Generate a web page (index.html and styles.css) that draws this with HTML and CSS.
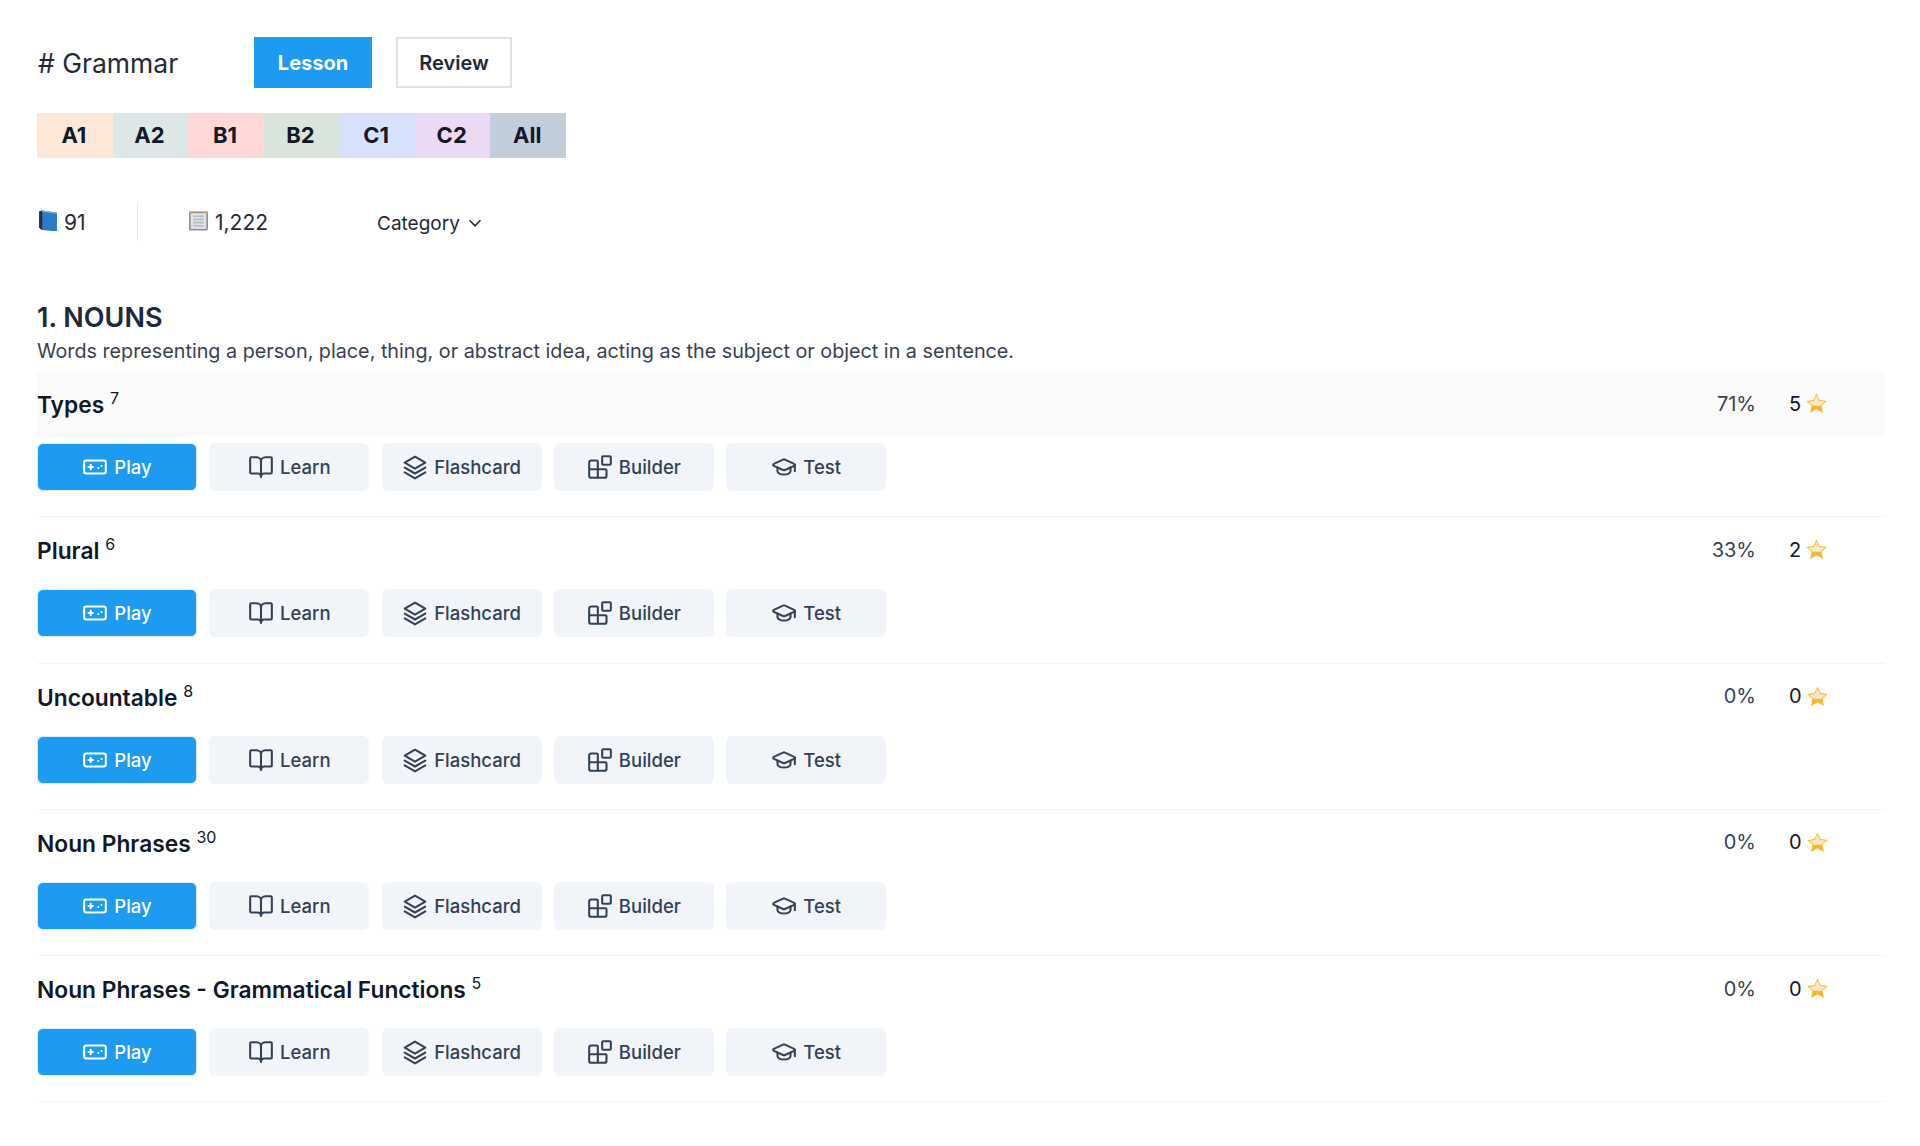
FILE: index.html
```html
<!DOCTYPE html>
<html lang="en">
<head>
    <meta charset="UTF-8">
    <title>Grammar</title>
    <link rel="stylesheet" href="styles.css">
</head>
<body>
    <svg class="sprites" width="0" height="0">
        <symbol id="i-play" viewBox="0 0 24 24"><path d="M6 12h4M8 10v4M15 13h.01M18 11h.01"/><rect x="2" y="6" width="20" height="12" rx="2"/></symbol>
        <symbol id="i-learn" viewBox="0 0 24 24"><path d="M12 7v14"/><path d="M3 18a1 1 0 0 1-1-1V4a1 1 0 0 1 1-1h5a4 4 0 0 1 4 4 4 4 0 0 1 4-4h5a1 1 0 0 1 1 1v13a1 1 0 0 1-1 1h-6a3 3 0 0 0-3 3 3 3 0 0 0-3-3z"/></symbol>
        <symbol id="i-flash" viewBox="0 0 24 24"><path d="M12 2.500 21.500 8 12 13.500 2.500 8z"/><path d="M2.500 12.500 12 18l9.500-5.500"/><path d="M2.500 17 12 22.500l9.500-5.500"/></symbol>
        <symbol id="i-build" viewBox="0 0 24 24"><rect x="14" y="2" width="8" height="8" rx="1"/><path d="M10 22V7a1 1 0 0 0-1-1H4a2 2 0 0 0-2 2v12a2 2 0 0 0 2 2h12a2 2 0 0 0 2-2v-5a1 1 0 0 0-1-1H2"/></symbol>
        <symbol id="i-test" viewBox="0 0 24 24"><path d="M21.420 10.922a1 1 0 0 0-.019-1.838L12.830 5.180a2 2 0 0 0-1.660 0L2.600 9.080a1 1 0 0 0 0 1.832l8.570 3.908a2 2 0 0 0 1.660 0z"/><path d="M22 10v6"/><path d="M6 12.500V16a6 3 0 0 0 12 0v-3.500"/></symbol>
        <symbol id="i-star" viewBox="0 0 24 24"><path class="star-fill" d="M12 1.500l3.200 6.900 7.500.9-5.500 5.100 1.500 7.400L12 18.100l-6.700 3.700 1.500-7.400L1.300 9.300l7.500-.9z"/><path class="star-top" d="M12 3.500l2.700 5.800 6 .8-4.600 4.200-8.200 0L3.300 10.100l6-.8z"/></symbol>
    </svg>

    <div class="page-head">
        <h1 class="page-title"># Grammar</h1>
        <a class="tab tab-active">Lesson</a>
        <a class="tab">Review</a>
    </div>

    <div class="levels">
        <span class="level a1">A1</span>
        <span class="level a2">A2</span>
        <span class="level b1">B1</span>
        <span class="level b2">B2</span>
        <span class="level c1">C1</span>
        <span class="level c2">C2</span>
        <span class="level all">All</span>
    </div>

    <div class="stats">
        <div class="stat stat-first">
            <svg class="emoji" viewBox="0 0 20 20"><path d="M2 1.500 5 .5l14 2v18L5 19l-3-2z" fill="#2a7cc7"/><path d="M2 1.500 5 .5v18.600L2 17z" fill="#25313f"/><path d="M5 .5l14 2v1L5 2z" fill="#6fa9de"/></svg>
            <span>91</span>
        </div>
        <div class="stat stat-second">
            <svg class="emoji" viewBox="0 0 20 20"><rect x="1" y="1.500" width="18" height="18" rx="1.500" fill="#8b8f94"/><rect x="2.500" y="3" width="15" height="15" fill="#dfe2e6"/><path d="M5 6h10M5 9h10M5 12h10M5 15h10" stroke="#b4b9bf" stroke-width="1.500"/><path d="M1 1.500h4v1.500H1zM15 1.500h4v1.500h-4z" fill="#d9a34d"/></svg>
            <span>1,222</span>
        </div>
        <div class="category">
            <span>Category</span>
            <svg class="chevron" viewBox="0 0 24 24"><path d="m6 9 6 6 6-6"/></svg>
        </div>
    </div>

    <h2 class="section-title">1. NOUNS</h2>
    <p class="section-desc">Words representing a person, place, thing, or abstract idea, acting as the subject or object in a sentence.</p>

    <div class="topic">
        <div class="topic-head topic-hover">
            <h3 class="topic-name">Types <sup>7</sup></h3>
            <span class="percent">71%</span>
            <span class="stars">5 <svg class="star"><use href="#i-star"/></svg></span>
        </div>
        <div class="actions">
            <a class="action action-play"><svg><use href="#i-play"/></svg>Play</a>
            <a class="action"><svg><use href="#i-learn"/></svg>Learn</a>
            <a class="action"><svg><use href="#i-flash"/></svg>Flashcard</a>
            <a class="action"><svg><use href="#i-build"/></svg>Builder</a>
            <a class="action"><svg><use href="#i-test"/></svg>Test</a>
        </div>
    </div>

    <div class="topic">
        <div class="topic-head">
            <h3 class="topic-name">Plural <sup>6</sup></h3>
            <span class="percent">33%</span>
            <span class="stars">2 <svg class="star"><use href="#i-star"/></svg></span>
        </div>
        <div class="actions">
            <a class="action action-play"><svg><use href="#i-play"/></svg>Play</a>
            <a class="action"><svg><use href="#i-learn"/></svg>Learn</a>
            <a class="action"><svg><use href="#i-flash"/></svg>Flashcard</a>
            <a class="action"><svg><use href="#i-build"/></svg>Builder</a>
            <a class="action"><svg><use href="#i-test"/></svg>Test</a>
        </div>
    </div>

    <div class="topic">
        <div class="topic-head">
            <h3 class="topic-name">Uncountable <sup>8</sup></h3>
            <span class="percent">0%</span>
            <span class="stars">0 <svg class="star"><use href="#i-star"/></svg></span>
        </div>
        <div class="actions">
            <a class="action action-play"><svg><use href="#i-play"/></svg>Play</a>
            <a class="action"><svg><use href="#i-learn"/></svg>Learn</a>
            <a class="action"><svg><use href="#i-flash"/></svg>Flashcard</a>
            <a class="action"><svg><use href="#i-build"/></svg>Builder</a>
            <a class="action"><svg><use href="#i-test"/></svg>Test</a>
        </div>
    </div>

    <div class="topic">
        <div class="topic-head">
            <h3 class="topic-name">Noun Phrases <sup>30</sup></h3>
            <span class="percent">0%</span>
            <span class="stars">0 <svg class="star"><use href="#i-star"/></svg></span>
        </div>
        <div class="actions">
            <a class="action action-play"><svg><use href="#i-play"/></svg>Play</a>
            <a class="action"><svg><use href="#i-learn"/></svg>Learn</a>
            <a class="action"><svg><use href="#i-flash"/></svg>Flashcard</a>
            <a class="action"><svg><use href="#i-build"/></svg>Builder</a>
            <a class="action"><svg><use href="#i-test"/></svg>Test</a>
        </div>
    </div>

    <div class="topic">
        <div class="topic-head">
            <h3 class="topic-name">Noun Phrases - Grammatical Functions <sup>5</sup></h3>
            <span class="percent">0%</span>
            <span class="stars">0 <svg class="star"><use href="#i-star"/></svg></span>
        </div>
        <div class="actions">
            <a class="action action-play"><svg><use href="#i-play"/></svg>Play</a>
            <a class="action"><svg><use href="#i-learn"/></svg>Learn</a>
            <a class="action"><svg><use href="#i-flash"/></svg>Flashcard</a>
            <a class="action"><svg><use href="#i-build"/></svg>Builder</a>
            <a class="action"><svg><use href="#i-test"/></svg>Test</a>
        </div>
    </div>
</body>
</html>
```

FILE: styles.css
```css
body {
    font-family: 'Inter', 'Liberation Sans', sans-serif;
    margin: 0;
    padding: 37px 35px 0 37px;
    background: white;
    color: #111827;
}
.sprites {
    position: absolute;
}
.page-head {
    display: flex;
    align-items: center;
    height: 51px;
}
.page-title {
    width: 217px;
    margin: 0;
    padding-left: 1px;
    box-sizing: border-box;
    font-size: 26.5px;
    font-weight: 400;
    color: #1f2937;
}
.tab {
    box-sizing: border-box;
    width: 116px;
    height: 51px;
    margin-right: 24px;
    display: flex;
    align-items: center;
    justify-content: center;
    border: 2px solid #dde1e6;
    font-size: 20px;
    font-weight: 600;
    color: #1f2937;
}
.tab-active {
    width: 118px;
    margin-right: 24px;
    background-color: #1c9bf1;
    border-color: #1c9bf1;
    font-weight: 700;
    color: white;
}
.levels {
    display: flex;
    margin-top: 25px;
    width: 529px;
}
.level {
    flex: 1;
    box-sizing: border-box;
    height: 45px;
    padding: 0 2px 2px 0;
    display: flex;
    align-items: center;
    justify-content: center;
    font-size: 22px;
    font-weight: 700;
    color: #111827;
}
.a1 { background-color: #fde8d7; }
.a2 { background-color: #dce8e8; }
.b1 { background-color: #fed7d7; }
.b2 { background-color: #d8e5dd; }
.c1 { background-color: #d6e2fd; }
.c2 { background-color: #ecd9f3; }
.all { background-color: #c1cedb; }
.stats {
    display: flex;
    align-items: center;
    height: 38px;
    margin-top: 45px;
    font-size: 21px;
    color: #1f2937;
}
.stat {
    display: flex;
    align-items: center;
    gap: 6px;
}
.stat-first {
    width: 100px;
    height: 38px;
    border-right: 1px solid #e5e7eb;
}
.stat-second {
    width: 189px;
    margin-left: 50px;
}
.emoji {
    width: 21px;
    height: 21px;
    margin-top: -3px;
}
.category {
    display: flex;
    align-items: center;
    gap: 4px;
    padding-top: 2px;
    font-size: 19px;
}
.chevron {
    width: 22px;
    height: 22px;
    fill: none;
    stroke: #1f2937;
    stroke-width: 1.8;
}
.section-title {
    margin: 61px 0 0;
    font-size: 27px;
    line-height: 32px;
    font-weight: 600;
    color: #1e293b;
}
.section-desc {
    margin: 0 0 3px;
    font-size: 19.75px;
    line-height: 34px;
    color: #374151;
}
.topic {
    border-bottom: 1px solid #f1f4f9;
    height: 145.3px;
}
.topic-head {
    display: flex;
    align-items: center;
    height: 65px;
    padding-right: 37px;
}
.topic-hover {
    background-color: #fafafa;
}
.topic-name {
    flex: 1;
    margin: 0;
    padding-top: 2px;
    font-size: 22.75px;
    font-weight: 600;
    color: #111827;
}
.topic-name sup {
    font-size: 16px;
    font-weight: 400;
    line-height: 0;
}
.percent {
    font-size: 20px;
    color: #374151;
}
.stars {
    display: flex;
    align-items: center;
    gap: 4px;
    width: 59px;
    margin-left: 33px;
    font-size: 20px;
    color: #111827;
}
.star {
    width: 23px;
    height: 23px;
}
.star-fill {
    fill: #f5b72f;
}
.star-top {
    fill: #fbe6c4;
}
.actions {
    display: flex;
    gap: 12.3px;
    margin-top: 7px;
}
.action {
    width: 160px;
    height: 48px;
    box-sizing: border-box;
    display: flex;
    align-items: center;
    justify-content: center;
    gap: 6px;
    background-color: #f1f4f9;
    border-radius: 6px;
    font-size: 18.5px;
    font-weight: 500;
    color: #334155;
}
.action svg {
    width: 26px;
    height: 26px;
    fill: none;
    stroke: #334155;
    stroke-width: 1.9;
    stroke-linecap: round;
    stroke-linejoin: round;
}
.action-play {
    background-color: #1c9bf1;
    border: 1px solid #dde9f5;
    color: white;
}
.action-play svg {
    stroke: white;
}
```
